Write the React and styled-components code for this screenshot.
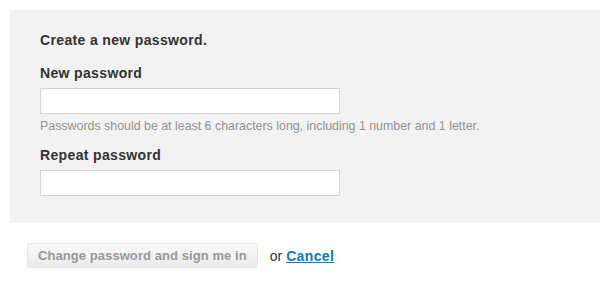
import React from "react";
import styled, { createGlobalStyle } from "styled-components";

const Global = createGlobalStyle`
  html, body { margin: 0; padding: 0; background: #fff; }
  body { font-family: "Liberation Sans", Arial, sans-serif; color: #333; }
`;

const Page = styled.div`
  padding: 10px 0 0 10px;
`;

const Panel = styled.form`
  background: #f2f2f2;
  padding: 22px 30px 27px 30px;
  display: flex;
  flex-direction: column;
  align-items: flex-start;
`;

const Intro = styled.div`
  font-size: 14px;
  font-weight: bold;
  letter-spacing: 0.35px;
  color: #333;
  line-height: 16px;
  margin-bottom: 17px;
`;

const Label = styled.label`
  font-size: 14px;
  font-weight: bold;
  letter-spacing: 0.35px;
  color: #333;
  line-height: 16px;
  margin-bottom: 7px;
`;

const Input = styled.input`
  box-sizing: border-box;
  width: 300px;
  height: 26px;
  border: 1px solid #d4d4d4;
  background: #fff;
  margin: 0;
  padding: 3px 5px;
`;

const Hint = styled.div`
  font-size: 12.4px;
  color: #929292;
  line-height: 14px;
  margin: 5px 0 14px;
`;

const Actions = styled.div`
  display: flex;
  align-items: center;
  padding: 20px 0 0 27px;
  font-size: 14px;
`;

const Button = styled.button`
  box-sizing: border-box;
  height: 25px;
  padding: 0 10px;
  border: 1px solid #e6e6e6;
  border-radius: 2px;
  background: linear-gradient(#f9f9f9, #ebebeb);
  color: #999;
  font-family: "Liberation Sans", Arial, sans-serif;
  font-size: 13px;
  font-weight: bold;
  letter-spacing: 0.07px;
`;

const Or = styled.span`
  margin-left: 12px;
  color: #333;
`;

const Cancel = styled.a`
  margin-left: 4px;
  color: #0a7ac8;
  font-weight: bold;
  letter-spacing: 0.35px;
  text-decoration: underline;
`;

export default function App() {
  return (
    <>
      <Global />
      <Page>
        <Panel>
          <Intro>Create a new password.</Intro>
          <Label>New password</Label>
          <Input type="password" />
          <Hint>
            Passwords should be at least 6 characters long, including 1 number and 1 letter.
          </Hint>
          <Label>Repeat password</Label>
          <Input type="password" />
        </Panel>
      </Page>
      <Actions>
        <Button type="button">Change password and sign me in</Button>
        <Or>or</Or>
        <Cancel href="#">Cancel</Cancel>
      </Actions>
    </>
  );
}
